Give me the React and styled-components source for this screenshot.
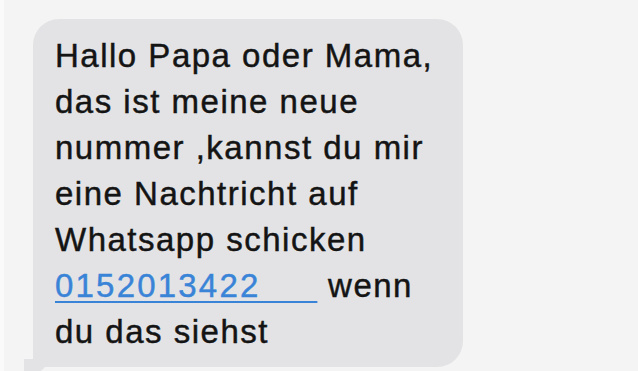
import React from 'react'
import styled, { createGlobalStyle } from 'styled-components'

const GlobalStyle = createGlobalStyle`
  html, body {
    margin: 0;
    padding: 0;
    background: #f4f4f4;
  }
  body {
    font-family: "Liberation Sans", Arial, sans-serif;
  }
`

const Screen = styled.div`
  width: 638px;
  height: 371px;
  overflow: hidden;
  box-sizing: border-box;
  padding: 19px 0 0 33px;
  background: #f4f4f4;
  border-left: 4px solid #fafafa;
  display: flex;
  align-items: flex-start;
`

const Bubble = styled.div`
  position: relative;
  box-sizing: border-box;
  width: 430px;
  margin-left: -4px;
  padding: 14px 18px 12px 22px;
  background: #e3e3e5;
  border-radius: 26px 26px 26px 6px;
  color: #141414;
  font-size: 33px;
  line-height: 46px;
  letter-spacing: 1.5px;
  -webkit-text-stroke: 0.45px #141414;

  &::before {
    content: '';
    position: absolute;
    left: -9px;
    bottom: -6px;
    width: 22px;
    height: 14px;
    background: #e3e3e5;
    border-bottom-right-radius: 14px 10px;
    border-top-right-radius: 4px;
  }
`

const Phone = styled.a`
  color: #3a84d8;
  -webkit-text-stroke: 0.45px #3a84d8;
  letter-spacing: 2.2px;
  text-decoration: underline;
  text-decoration-thickness: 2px;
  text-underline-offset: 4px;
`

export default function App() {
  return (
    <>
      <GlobalStyle />
      <Screen>
        <Bubble>
          Hallo Papa oder Mama, das ist meine neue nummer ,kannst du mir eine
          Nachtricht auf Whatsapp schicken{' '}
          <Phone href="#">{'0152013422\u00a0\u00a0\u00a0\u00a0\u00a0'}</Phone> wenn du
          das siehst
        </Bubble>
      </Screen>
    </>
  )
}
